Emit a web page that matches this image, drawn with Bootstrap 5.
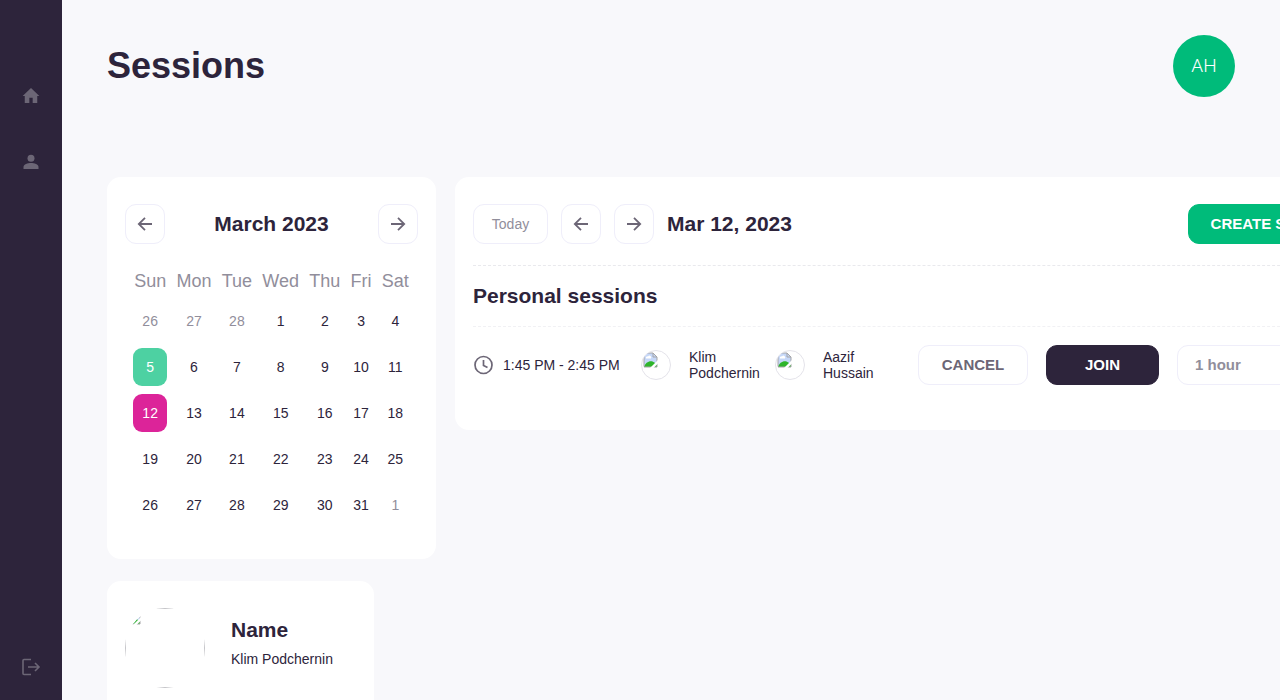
<!DOCTYPE html>
<html lang="en">
<head>
<meta charset="utf-8">
<meta name="viewport" content="width=device-width, initial-scale=1">
<title>Sessions</title>
<link href="https://cdn.jsdelivr.net/npm/bootstrap@5.3.0/dist/css/bootstrap.min.css" rel="stylesheet">
<style>
  :root { --ink: #2d243b; --muted-ink: #918e9b; --line: #efeefa; --green: #00bb7a; }
  body { font-family: "Liberation Sans", Arial, sans-serif; font-size: 14px; line-height: 16px; color: var(--ink); background: #f8f8fb; }
  .sidebar { width: 62px; background: var(--ink); padding: 86px 0 23px; color: #6c6676; }
  .sidebar a { color: inherit; line-height: 0; }
  .side-links { gap: 46px; }
  .content { padding: 35px 45px 0 45px; }
  .page-title { font-size: 36px; line-height: 44px; }
  .avatar { width: 62px; height: 62px; background: var(--green); font-family: Roboto, sans-serif; font-weight: 300; font-size: 19px; }
  .avatar:hover { color: #fff; }
  .columns { margin-top: 80px; gap: 19px; }
  .left-col { gap: 22px; }
  .panel { background: #fff; border-radius: 14px; padding: 27px 18px; }
  .calendar { width: 329px; }
  .profile { width: 267px; gap: 26px; }
  .profile-text { padding-top: 9px; }
  .schedule { min-width: 928px; padding-bottom: 45px; }
  .heading { font-size: 21px; line-height: 26px; font-weight: 700; margin: 0; }
  .ctl { --bs-btn-color: #6c6676; --bs-btn-border-color: var(--line); --bs-btn-hover-border-color: #d8d6ea; height: 40px; border-radius: 11px; font-size: 15px; line-height: 18px; padding: 0; }
  .ctl-icon { width: 40px; }
  .ctl-icon svg { display: block; margin: auto; }
  .ctl-today { width: 75px; font-size: 14px; color: var(--muted-ink); }
  .ctl-create { --bs-btn-color: #fff; --bs-btn-bg: var(--green); --bs-btn-border-color: var(--green); --bs-btn-hover-color: #fff; --bs-btn-hover-bg: #00a86d; padding: 0 22px; }
  .ctl-cancel { width: 110px; }
  .ctl-join { width: 113px; --bs-btn-color: #fff; --bs-btn-bg: var(--ink); --bs-btn-border-color: var(--ink); --bs-btn-hover-color: #fff; --bs-btn-hover-bg: #403552; }
  .ctl-length { width: 160px; height: 40px; border: 1px solid var(--line); border-radius: 11px; padding: 0 36px 0 17px; font-size: 15px; font-weight: 700; color: var(--muted-ink); }
  .days { width: 100%; margin-top: 20px; margin-bottom: 4px; text-align: center; }
  .days-wrap { padding: 0 4px; }
  .days th { font-size: 18px; font-weight: 400; color: var(--muted-ink); height: 34px; padding: 0 5px; }
  .days td { height: 46px; padding: 0 4px; }
  .day { width: 100%; height: 38px; padding: 0; border: 0; border-radius: 9px; background: none; color: inherit; }
  .day-out { color: var(--muted-ink); }
  .day-today { background: #4dd1a2; color: #fff; }
  .day-picked { background: #dc2499; color: #fff; }
  .tools { gap: 13px; padding-bottom: 21px; }
  .section-title { padding: 17px 0; border-top: 1px dashed #e9e9ed; border-bottom: 1px dashed #f1f1f4; }
  .session { padding-top: 18px; }
  .session-time { width: 168px; gap: 10px; }
  .person { gap: 18px; }
  .person-first { width: 134px; }
  .person-second { width: 143px; }
  .session-actions { gap: 18px; }
  .photo { border-radius: 50%; flex: none; }
  .photo-ring { border: 1px solid #e4e3ea; }
</style>
</head>
<body>
<svg class="d-none" aria-hidden="true">
  <symbol id="arrow-left" viewBox="0 0 16 16"><path d="M15 8H2M8 1.800 1.800 8 8 14.200" fill="none" stroke="currentColor" stroke-width="1.800"/></symbol>
  <symbol id="arrow-right" viewBox="0 0 16 16"><path d="M1 8H14M8 1.800 14.200 8 8 14.200" fill="none" stroke="currentColor" stroke-width="1.800"/></symbol>
  <symbol id="missing" viewBox="0 0 16 16">
    <path d="M1 1h9l4 4v10H1z" fill="#c5d7f8"/>
    <path d="M3 6.500a1.500 1.500 0 0 1 2-2 1.700 1.700 0 0 1 3 2z" fill="#fff"/>
    <path d="M1 15C2 11 6 8.500 9.500 9.500L14 12v3z" fill="#2eb52a"/>
    <path d="M1 14.500V1h9l4 4v10H1M10 1v4h4" fill="none" stroke="#a5a5a8"/>
    <path d="M16 7 7 16h3.500L16 10.500z" fill="#fff"/>
  </symbol>
</svg>
<div class="d-flex vh-100 overflow-hidden">
  <nav class="sidebar d-flex flex-column justify-content-between align-items-center flex-shrink-0" aria-label="Main">
    <div class="side-links d-flex flex-column">
      <a href="#" aria-label="Home"><svg width="20" height="20" viewBox="0 0 24 24" fill="currentColor"><path d="M10 20.500v-6.500h4v6.500h5.500V12h2.500L12 2.500 2 12h2.500v8.500z"/></svg></a>
      <a href="#" aria-label="Profile"><svg width="20" height="20" viewBox="0 0 24 24" fill="currentColor"><circle cx="12" cy="7.500" r="4.200"/><path d="M3 20.500V18c0-3 5-4.700 9-4.700s9 1.700 9 4.700v2.500z"/></svg></a>
    </div>
    <a href="#" aria-label="Log out"><svg width="20" height="20" viewBox="0 0 20 20" fill="none" stroke="currentColor" stroke-width="1.600"><path d="M10 2.500H3q-1 0-1 1v13q0 1 1 1h7M7 10h11M14 6l4 4-4 4"/></svg></a>
  </nav>
  <main class="content flex-grow-1 overflow-hidden">
    <header class="d-flex justify-content-between align-items-center">
      <h1 class="page-title fw-bold m-0">Sessions</h1>
      <button type="button" class="avatar btn rounded-circle border-0 p-0 text-white">AH</button>
    </header>
    <div class="columns d-flex align-items-start">
      <div class="left-col d-flex flex-column flex-shrink-0">
        <section class="panel calendar">
          <div class="d-flex justify-content-between align-items-center">
            <button type="button" class="btn ctl ctl-icon" aria-label="Previous month"><svg width="16" height="16"><use href="#arrow-left"/></svg></button>
            <h2 class="heading">March 2023</h2>
            <button type="button" class="btn ctl ctl-icon" aria-label="Next month"><svg width="16" height="16"><use href="#arrow-right"/></svg></button>
          </div>
          <div class="days-wrap">
          <table class="days">
            <thead><tr><th>Sun</th><th>Mon</th><th>Tue</th><th>Wed</th><th>Thu</th><th>Fri</th><th>Sat</th></tr></thead>
            <tbody>
              <tr><td><button class="day day-out">26</button></td><td><button class="day day-out">27</button></td><td><button class="day day-out">28</button></td><td><button class="day">1</button></td><td><button class="day">2</button></td><td><button class="day">3</button></td><td><button class="day">4</button></td></tr>
              <tr><td><button class="day day-today">5</button></td><td><button class="day">6</button></td><td><button class="day">7</button></td><td><button class="day">8</button></td><td><button class="day">9</button></td><td><button class="day">10</button></td><td><button class="day">11</button></td></tr>
              <tr><td><button class="day day-picked">12</button></td><td><button class="day">13</button></td><td><button class="day">14</button></td><td><button class="day">15</button></td><td><button class="day">16</button></td><td><button class="day">17</button></td><td><button class="day">18</button></td></tr>
              <tr><td><button class="day">19</button></td><td><button class="day">20</button></td><td><button class="day">21</button></td><td><button class="day">22</button></td><td><button class="day">23</button></td><td><button class="day">24</button></td><td><button class="day">25</button></td></tr>
              <tr><td><button class="day">26</button></td><td><button class="day">27</button></td><td><button class="day">28</button></td><td><button class="day">29</button></td><td><button class="day">30</button></td><td><button class="day">31</button></td><td><button class="day day-out">1</button></td></tr>
            </tbody>
          </table>
          </div>
        </section>
        <section class="panel profile d-flex align-items-start">
          <svg class="photo" width="80" height="80" role="img" aria-label="Profile photo"><rect x=".5" y=".5" width="79" height="79" fill="none" stroke="#c4c4c8"/><use href="#missing" x="1" y="1" width="16" height="16"/></svg>
          <div class="profile-text">
            <h2 class="heading mb-2">Name</h2>
            <div>Klim Podchernin</div>
          </div>
        </section>
      </div>
      <section class="panel schedule flex-shrink-0">
        <div class="tools d-flex align-items-center">
          <button type="button" class="btn ctl ctl-today">Today</button>
          <button type="button" class="btn ctl ctl-icon" aria-label="Previous day"><svg width="16" height="16"><use href="#arrow-left"/></svg></button>
          <button type="button" class="btn ctl ctl-icon" aria-label="Next day"><svg width="16" height="16"><use href="#arrow-right"/></svg></button>
          <h2 class="heading">Mar 12, 2023</h2>
          <button type="button" class="btn ctl ctl-create fw-bold ms-auto">CREATE SESSION</button>
        </div>
        <h3 class="heading section-title">Personal sessions</h3>
        <div class="session d-flex align-items-center">
          <div class="session-time d-flex align-items-center text-nowrap">
            <svg width="20" height="20" viewBox="0 0 20 20" fill="none" stroke="#6c6676" stroke-width="1.700"><circle cx="10.500" cy="10" r="8.500"/><path d="M10.500 5v5.500l4 2"/></svg>
            <span>1:45 PM - 2:45 PM</span>
          </div>
          <div class="person person-first d-flex align-items-center">
            <svg class="photo photo-ring" width="30" height="30" role="img" aria-label="Klim Podchernin"><use href="#missing" x="1" y="1" width="16" height="16"/></svg>
            <span>Klim<br>Podchernin</span>
          </div>
          <div class="person person-second d-flex align-items-center">
            <svg class="photo photo-ring" width="30" height="30" role="img" aria-label="Aazif Hussain"><use href="#missing" x="1" y="1" width="16" height="16"/></svg>
            <span>Aazif<br>Hussain</span>
          </div>
          <div class="session-actions d-flex">
            <button type="button" class="btn ctl ctl-cancel fw-bold">CANCEL</button>
            <button type="button" class="btn ctl ctl-join fw-bold">JOIN</button>
            <select class="form-select ctl-length" aria-label="Session length"><option>1 hour</option><option>2 hours</option></select>
          </div>
        </div>
      </section>
    </div>
  </main>
</div>
<script src="https://cdn.jsdelivr.net/npm/bootstrap@5.3.0/dist/js/bootstrap.bundle.min.js"></script>
</body>
</html>
